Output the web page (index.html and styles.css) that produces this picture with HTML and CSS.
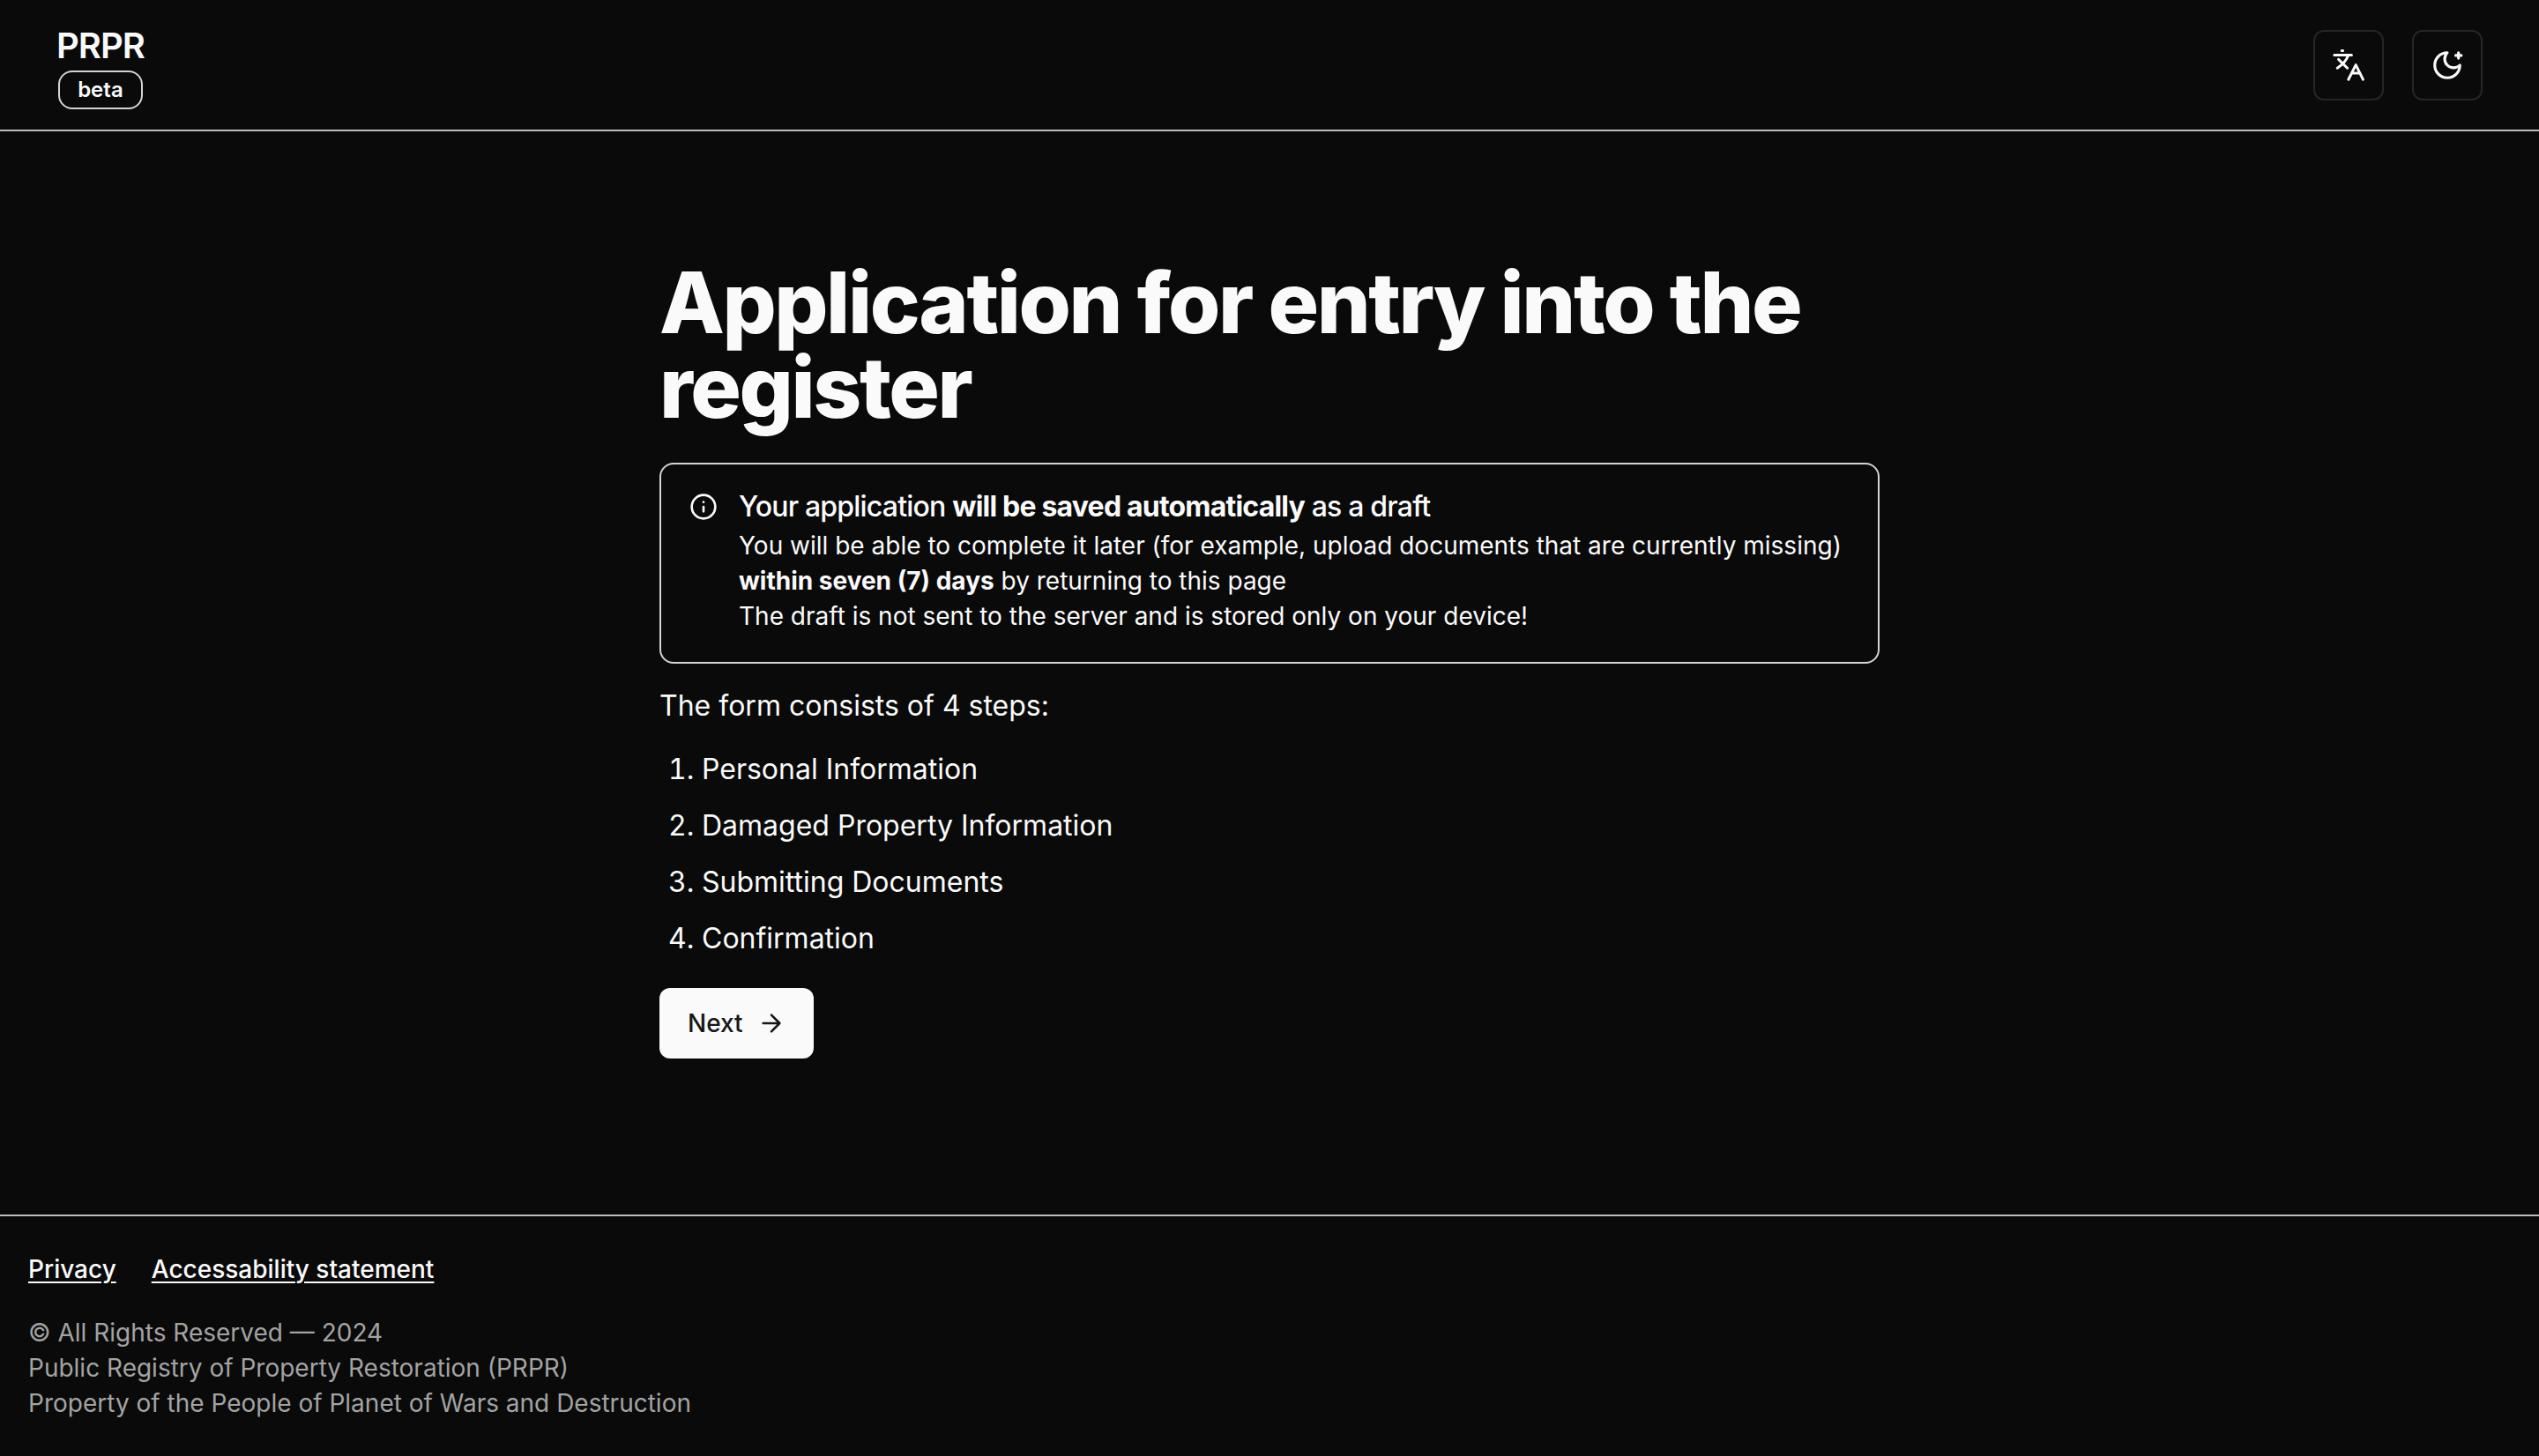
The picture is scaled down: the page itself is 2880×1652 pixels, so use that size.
FILE: index.html
```html
<!DOCTYPE html>
<html lang="en">
<head>
  <meta charset="utf-8">
  <meta name="viewport" content="width=device-width, initial-scale=1">
  <title>PRPR</title>
  <link rel="stylesheet" href="styles.css">
</head>
<body>
  <header class="site-header">
    <a class="brand" href="#">
      <span class="brand-name">PRPR</span>
      <span class="badge">beta</span>
    </a>
    <div class="actions">
      <button class="icon-button" type="button" aria-label="Change language">
        <svg class="icon-large" viewBox="0 0 38 38" fill="none" stroke="currentColor" stroke-width="3" stroke-linecap="round" stroke-linejoin="round">
          <path d="M2.8 7.4H22.4M11.2 2.6H12.6M18.8 7.6C16.8 13 12.4 18.4 6.2 22.2M7.6 12.4L17.6 22.2"/>
          <path d="M18.8 35.2L27.2 18.6L35.4 35.2M22.4 28H32"/>
        </svg>
      </button>
      <button class="icon-button" type="button" aria-label="Toggle theme">
        <svg class="icon-large" viewBox="0 0 24 24" fill="none" stroke="currentColor" stroke-width="2" stroke-linecap="round" stroke-linejoin="round">
          <path d="M12 3a6 6 0 0 0 9 9 9 9 0 1 1-9-9Z"/>
          <path d="M20 3v4M22 5h-4"/>
        </svg>
      </button>
    </div>
  </header>

  <main class="content">
    <h1 class="title">Application for entry into the register</h1>
    <section class="alert" role="note">
      <svg class="icon" viewBox="0 0 24 24" fill="none" stroke="currentColor" stroke-width="2" stroke-linecap="round" stroke-linejoin="round">
        <circle cx="12" cy="12" r="10"/>
        <path d="M12 16v-4M12 8h.01"/>
      </svg>
      <div class="alert-body">
        <h2 class="alert-title">Your application <strong>will be saved automatically</strong> as a draft</h2>
        <p>You will be able to complete it later (for example, upload documents that are currently missing) <strong>within seven (7) days</strong> by returning to this page</p>
        <p>The draft is not sent to the server and is stored only on your device!</p>
      </div>
    </section>
    <p class="intro">The form consists of 4 steps:</p>
    <ol class="steps">
      <li>Personal Information</li>
      <li>Damaged Property Information</li>
      <li>Submitting Documents</li>
      <li>Confirmation</li>
    </ol>
    <button class="next" type="button">
      Next
      <svg class="icon" viewBox="0 0 24 24" fill="none" stroke="currentColor" stroke-width="2" stroke-linecap="round" stroke-linejoin="round">
        <path d="M5 12h14M12 5l7 7-7 7"/>
      </svg>
    </button>
  </main>

  <footer class="site-footer">
    <nav class="footer-links">
      <a href="#">Privacy</a>
      <a href="#">Accessability statement</a>
    </nav>
    <div class="legal">
      <p>© All Rights Reserved — 2024</p>
      <p>Public Registry of Property Restoration (PRPR)</p>
      <p>Property of the People of Planet of Wars and Destruction</p>
    </div>
  </footer>
</body>
</html>
```
FILE: styles.css
```css
*, *::before, *::after {
  box-sizing: border-box;
}

:root {
  --bg: #0a0a0a;
  --fg: #fafafa;
  --muted: #a3a3a3;
  --line: #babbbe;
  --frame: #d4d4d4;
  --outline: #262626;
}

body {
  margin: 0;
  min-height: 100vh;
  display: flex;
  flex-direction: column;
  background: var(--bg);
  color: var(--fg);
  font-family: Inter, "Liberation Sans", sans-serif;
  font-size: 32px;
  line-height: 48px;
}

h1, h2, p, ol {
  margin: 0;
}

button {
  font: inherit;
  cursor: pointer;
}

.site-header {
  display: flex;
  align-items: center;
  justify-content: space-between;
  padding: 24px 64px 23px;
  border-bottom: 2px solid var(--line);
}

.brand {
  display: flex;
  flex-direction: column;
  align-items: center;
  color: inherit;
  text-decoration: none;
}

.brand-name {
  font-size: 40px;
  line-height: 56px;
  font-weight: 600;
  letter-spacing: -0.025em;
}

.badge {
  padding: 4px 20px;
  border: 2px solid var(--frame);
  border-radius: 16px;
  font-size: 24px;
  line-height: 32px;
  font-weight: 600;
}

.actions {
  display: flex;
  gap: 32px;
}

.icon-button {
  display: flex;
  align-items: center;
  justify-content: center;
  width: 80px;
  height: 80px;
  padding: 0;
  border: 2px solid var(--outline);
  border-radius: 12px;
  background: var(--bg);
  color: var(--fg);
}

.icon-large {
  width: 38px;
  height: 38px;
}

.icon {
  flex: none;
  width: 32px;
  height: 32px;
}

.content {
  flex: 1;
  width: 100%;
  max-width: 1384px;
  margin: 0 auto;
  padding: 146px 0 176px;
}

.title {
  margin-bottom: 38px;
  font-size: 96px;
  line-height: 96px;
  font-weight: 800;
  letter-spacing: -0.025em;
}

.alert {
  display: flex;
  gap: 24px;
  padding: 32px;
  border: 2px solid var(--frame);
  border-radius: 16px;
  font-size: 28px;
  line-height: 40px;
}

.alert-title {
  margin-bottom: 8px;
  font-size: 32px;
  line-height: 32px;
  font-weight: 500;
  letter-spacing: -0.025em;
}

strong {
  font-weight: 700;
}

.intro {
  margin-top: 24px;
}

.steps {
  display: flex;
  flex-direction: column;
  gap: 16px;
  margin: 24px 0 32px;
  padding-left: 48px;
}

.next {
  display: flex;
  align-items: center;
  gap: 16px;
  height: 80px;
  padding: 0 32px;
  border: 0;
  border-radius: 12px;
  background: var(--fg);
  color: #171717;
  font-size: 28px;
  line-height: 40px;
  font-weight: 500;
}

.site-footer {
  display: flex;
  flex-direction: column;
  gap: 32px;
  padding: 40px 32px;
  border-top: 2px solid var(--line);
  font-size: 28px;
  line-height: 40px;
}

.footer-links {
  display: flex;
  gap: 40px;
}

.footer-links a {
  color: inherit;
  font-weight: 500;
  text-decoration: underline;
  text-decoration-thickness: 2px;
  text-underline-offset: 4px;
}

.legal {
  color: var(--muted);
}
```
